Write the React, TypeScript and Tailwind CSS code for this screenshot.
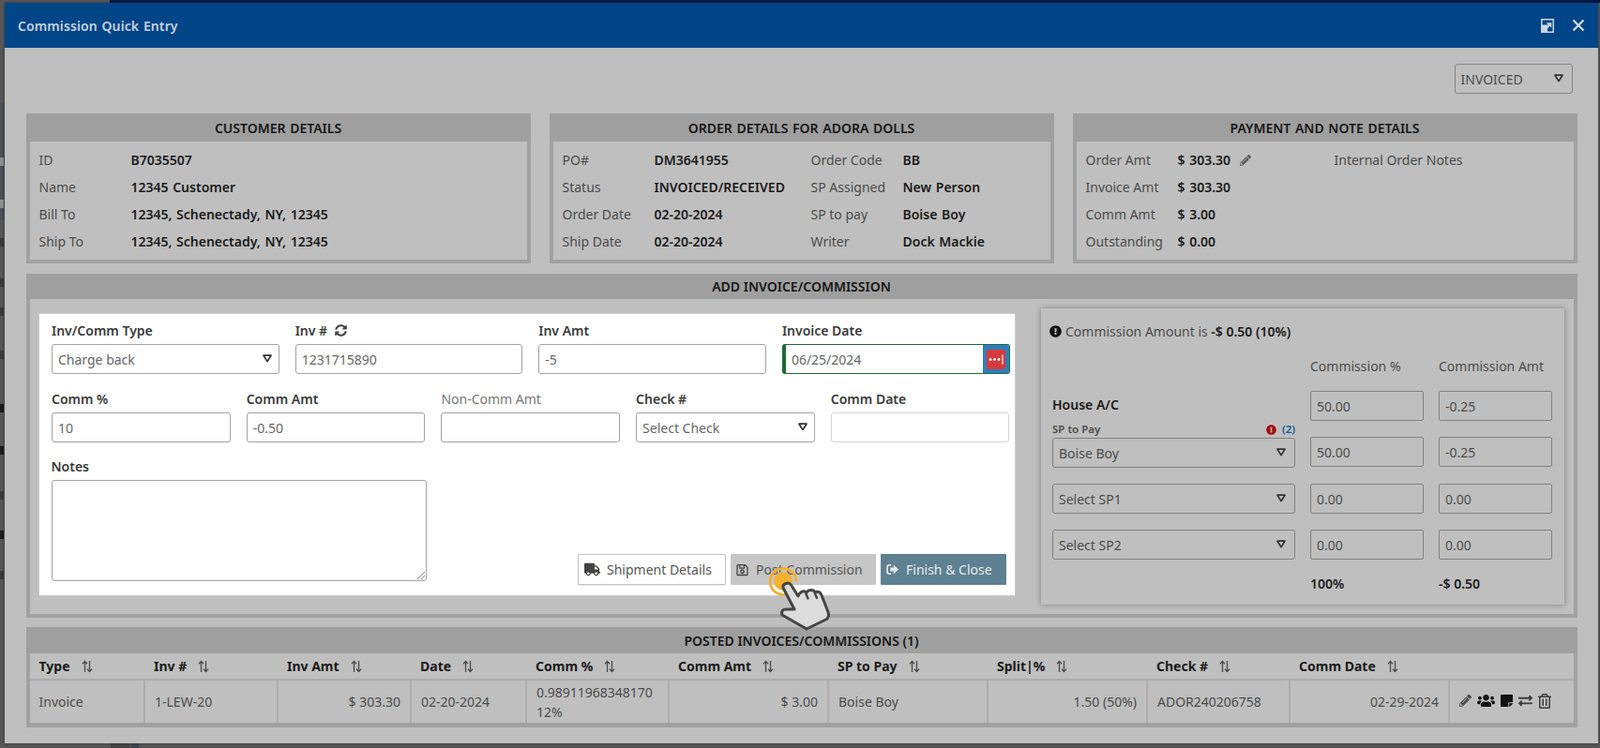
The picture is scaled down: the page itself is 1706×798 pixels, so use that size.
import type { ReactNode } from 'react';
import { FaExclamationCircle, FaExchangeAlt, FaPencilAlt, FaRegSave, FaRegTrashAlt, FaStickyNote, FaSyncAlt, FaTruck, FaUsers } from 'react-icons/fa';

function Caret() {
  return (
    <svg viewBox="0 0 10 9" className="w-[10px] h-[9px] shrink-0 -mt-[2px]">
      <path d="M1 1.2h8L5 7.6z" fill="none" stroke="#333" strokeWidth="1.7" strokeLinejoin="round" />
    </svg>
  );
}

function SortIcon() {
  return (
    <svg viewBox="0 0 12 14" className="w-[12px] h-[14px] ml-[12px] shrink-0">
      <path d="M3.5 13V2M1 4.2 3.5 1.4 6 4.2M8.5 1v11M6 9.8l2.5 2.8 2.5-2.8" fill="none" stroke="#4a4a4a" strokeWidth="1.3" />
    </svg>
  );
}

function SelectBox({ text, className }: { text: string; className: string }) {
  return (
    <div className={`h-[32px] flex items-center justify-between pl-[6px] pr-[9px] rounded-[3px] border text-[14px] ${className}`}>
      <span>{text}</span>
      <Caret />
    </div>
  );
}

function PanelBox({ title, children }: { title: string; children: ReactNode }) {
  return (
    <div className="h-[160px] border-x-[4px] border-b-[4px] border-[#a1a1a1]">
      <div className="h-[30px] -mx-[4px] bg-[#9f9f9f] flex items-center justify-center text-[14px] font-semibold text-[#151515] [word-spacing:1px]">{title}</div>
      {children}
    </div>
  );
}

function DetailRows({ rows, className }: { rows: ReactNode[][]; className: string }) {
  return (
    <div className={`grid auto-rows-[29px] pl-[10px] pt-[5px] items-center text-[14px] ${className}`}>
      {rows.map((row, r) =>
        row.map((c, i) => (
          <div key={`${r}-${i}`} className={i % 2 === 0 ? 'text-[#4b4b4b]' : 'font-semibold text-[#1a1a1a] [word-spacing:1px]'}>{c}</div>
        )),
      )}
    </div>
  );
}

function FormLabel({ children, light }: { children: ReactNode; light?: boolean }) {
  return (
    <div className={`h-[20px] mb-[4px] flex items-center text-[14px] -translate-y-[1px] ${light ? 'text-[#777]' : 'font-semibold text-[#3a3a3a]'}`}>{children}</div>
  );
}

function TextBox({ value, className = 'border-[#a3a3a3]' }: { value?: string; className?: string }) {
  return (
    <div className={`h-[32px] flex items-center px-[6px] rounded-[3px] border bg-white text-[14px] text-[#666] ${className}`}>{value}</div>
  );
}

function GreyInput({ value }: { value: string }) {
  return (
    <div className="h-[32px] flex items-center px-[6px] rounded-[2px] border-[1.5px] border-[#828282] text-[14px] text-[#4c4c4c]">{value}</div>
  );
}

function ExpandIcon() {
  return (
    <svg viewBox="0 0 14 15" className="w-[14px] h-[15px]">
      <path fillRule="evenodd" fill="#c9d5e2" d="M0 0h14v15H0zM1.5 1.5v5h3v-3h0v3h3.2L5.8 4.2h5.5v5.5L9.4 7.8 7 10.4v3.1h5.5V1.5z" />
      <rect x="1.5" y="10.5" width="3.4" height="3" fill="#c9d5e2" />
    </svg>
  );
}

function CloseIcon() {
  return (
    <svg viewBox="0 0 14 14" className="w-[14px] h-[14px]">
      <path d="M1.5 1.5 12.5 12.5M12.5 1.5 1.5 12.5" fill="none" stroke="#d3dce6" strokeWidth="2.2" />
    </svg>
  );
}

function DotsIcon() {
  return (
    <svg viewBox="0 0 20 21" className="w-[20px] h-[21px]">
      <rect width="20" height="21" rx="2.5" fill="#d63a3a" />
      <circle cx="4" cy="10.5" r="1.4" fill="#fff" />
      <circle cx="8.5" cy="10.5" r="1.4" fill="#fff" />
      <circle cx="13" cy="10.5" r="1.4" fill="#fff" />
      <rect x="16.4" y="5.5" width="1.2" height="10" fill="#fff" />
    </svg>
  );
}

function ExitIcon() {
  return (
    <svg viewBox="0 0 15 13" className="w-[14px] h-[13px]">
      <path d="M5.5 1.5H3A1.8 1.8 0 0 0 1.2 3.3v6.4A1.8 1.8 0 0 0 3 11.5h2.5" fill="none" stroke="#e6ecf0" strokeWidth="1.8" />
      <path d="M8.4 1.2 14 6.5l-5.6 5.3V8.7H4.6V4.3h3.8z" fill="#e6ecf0" />
    </svg>
  );
}

// pulse ring and pointer drawn over the Post Commission button
function ClickHand() {
  return (
    <svg viewBox="0 0 70 70" className="absolute left-[820px] top-[605px] w-[70px] h-[70px] pointer-events-none">
      <path d="M22 27.5A14 14 0 1 1 29 15" fill="none" stroke="#f5ad2e" strokeWidth="2.6" />
      <circle cx="15" cy="15" r="10" fill="#f7b02f" />
      <path
        d="M15 22C14 17.5 21 15.5 23.5 19L31 31C32 27 37 24 40 27C42 24 47 23.5 49.5 27C52 25 55 27 56 30L63 48C64 51 63 54 61.5 55.5L40 66L14 51C12.5 47 15 45 18 45L27 45Z"
        fill="#dcdcdc"
        stroke="#454545"
        strokeWidth="3"
        strokeLinejoin="round"
      />
      <path d="M39 27.5l2.5 6M48.5 27l2.500 6" fill="none" stroke="#454545" strokeWidth="2.4" strokeLinecap="round" />
    </svg>
  );
}

const headers = ['Type', 'Inv #', 'Inv Amt', 'Date', 'Comm %', 'Comm Amt', 'SP to Pay', 'Split|%', 'Check #', 'Comm Date'];

// slivers of the page text that shows behind the modal on its left edge
const slivers: [number, string][] = [
  [168, '#8f8f8f'],
  [213, '#8f8f8f'],
  [254, '#3a3a3a'],
  [297, '#3a3a3a'],
  [328, '#3a3a3a'],
  [374, '#3a3a3a'],
  [431, '#1c1c1c'],
  [476, '#1c1c1c'],
  [524, '#3a3a3a'],
  [566, '#1c1c1c'],
  [609, '#3a3a3a'],
];

export default function App() {
  return (
    <div className="relative w-[1706px] h-[798px] overflow-hidden bg-[#565656] font-['Open_Sans',sans-serif]">
      <div className="absolute left-[117px] top-0 right-0 h-[3px] bg-[#001a45]" />
      <div className="absolute left-0 top-[110px] w-[5px] h-[125px] bg-[#4a5058]" />
      <div className="absolute left-[118px] bottom-0 w-[20px] h-[5px] bg-[#454545]" />
      <div className="absolute left-[140px] bottom-0 w-[8px] h-[5px] bg-[#3f4650]" />
      {slivers.map(([top, color]) => (
        <div key={top} className="absolute left-0 w-[4px] h-[9px]" style={{ top, backgroundColor: color }} />
      ))}

      <div className="absolute left-[5px] top-[3px] w-[1699px] h-[790px] bg-[#bfbfbf] shadow-[0_0_3px_rgba(0,0,0,0.4)]">
        <div className="h-[48px] bg-[#004587] flex items-center justify-between pl-[14px] pr-[14px]">
          <span className="text-[14px] font-semibold text-[#c5d2df] tracking-[0.1px] [word-spacing:1px]">Commission Quick Entry</span>
          <div className="flex items-center gap-[19px]">
            <ExpandIcon />
            <CloseIcon />
          </div>
        </div>

        <div className="px-[22.5px]">
          <div className="flex justify-end pt-[17px] pr-[5px]">
            <SelectBox text="INVOICED" className="w-[126px] border-[#858585] border-[1.5px] text-[#4c4c4c]" />
          </div>

          <div className="grid grid-cols-3 gap-x-[20px] mt-[21px]">
            <PanelBox title="CUSTOMER DETAILS">
              <DetailRows
                className="grid-cols-[98px_1fr]"
                rows={[
                  ['ID', 'B7035507'],
                  ['Name', '12345 Customer'],
                  ['Bill To', '12345, Schenectady, NY, 12345'],
                  ['Ship To', '12345, Schenectady, NY, 12345'],
                ]}
              />
            </PanelBox>
            <PanelBox title="ORDER DETAILS FOR ADORA DOLLS">
              <DetailRows
                className="grid-cols-[98px_167px_98px_1fr]"
                rows={[
                  ['PO#', 'DM3641955', 'Order Code', 'BB'],
                  ['Status', 'INVOICED/RECEIVED', 'SP Assigned', 'New Person'],
                  ['Order Date', '02-20-2024', 'SP to pay', 'Boise Boy'],
                  ['Ship Date', '02-20-2024', 'Writer', 'Dock Mackie'],
                ]}
              />
            </PanelBox>
            <PanelBox title="PAYMENT AND NOTE DETAILS">
              <DetailRows
                className="grid-cols-[98px_167px_1fr]"
                rows={[
                  [
                    'Order Amt',
                    <span className="flex items-center gap-[10px]">
                      $ 303.30
                      <FaPencilAlt className="w-[12px] h-[12px] text-[#5e5e5e]" />
                    </span>,
                    'Internal Order Notes',
                  ],
                  ['Invoice Amt', '$ 303.30', ''],
                  ['Comm Amt', '$ 3.00', ''],
                  ['Outstanding', '$ 0.00', ''],
                ]}
              />
            </PanelBox>
          </div>

          <div className="mt-[11px] h-[367px] border-x-[4px] border-b-[4px] border-[#a1a1a1]">
            <div className="h-[27px] -mx-[4px] bg-[#9f9f9f] flex items-center justify-center text-[14px] font-semibold text-[#151515]">ADD INVOICE/COMMISSION</div>
            <div className="flex items-start pl-[10px]">
              <div className="mt-[16px] w-[1040.5px] h-[300px] bg-white pl-[13.5px] pr-[5.5px] pt-[8px] shadow-[0_0_2px_rgba(255,255,255,0.6)]">
                <div className="grid grid-cols-4 gap-x-[17px]">
                  <div>
                    <FormLabel>Inv/Comm Type</FormLabel>
                    <SelectBox text="Charge back" className="border-[#a3a3a3] bg-white text-[#666] !pr-[7px]" />
                  </div>
                  <div>
                    <FormLabel>
                      Inv #
                      <FaSyncAlt className="w-[13px] h-[13px] ml-[8px] text-[#444]" />
                    </FormLabel>
                    <TextBox value="1231715890" />
                  </div>
                  <div>
                    <FormLabel>Inv Amt</FormLabel>
                    <TextBox value="-5" />
                  </div>
                  <div>
                    <FormLabel>Invoice Date</FormLabel>
                    <div className="h-[32px] flex rounded-[3px] border border-[#1f6b33] border-l-[4px] overflow-hidden text-[14px] text-[#666]">
                      <div className="flex-1 flex items-center pl-[6px]">06/25/2024</div>
                      <div className="w-[28px] bg-[#2f7dbd] flex items-center justify-center">
                        <DotsIcon />
                      </div>
                    </div>
                  </div>
                </div>

                <div className="grid grid-cols-5 gap-x-[17px] mt-[17px]">
                  <div>
                    <FormLabel>Comm %</FormLabel>
                    <TextBox value="10" />
                  </div>
                  <div>
                    <FormLabel>Comm Amt</FormLabel>
                    <TextBox value="-0.50" />
                  </div>
                  <div>
                    <FormLabel light>Non-Comm Amt</FormLabel>
                    <TextBox />
                  </div>
                  <div>
                    <FormLabel>Check #</FormLabel>
                    <SelectBox text="Select Check" className="border-[#a3a3a3] bg-white text-[#666] !pr-[7px]" />
                  </div>
                  <div>
                    <FormLabel>Comm Date</FormLabel>
                    <TextBox className="border-[#d4d4d4]" />
                  </div>
                </div>

                <div className="flex justify-between mt-[16px] -ml-[0.5px] mr-[3.5px]">
                  <div className="w-[400px]">
                    <FormLabel>Notes</FormLabel>
                    <div className="relative h-[108px] rounded-[3px] border border-[#a3a3a3]">
                      <svg viewBox="0 0 8 8" className="absolute right-[1px] bottom-[1px] w-[8px] h-[8px]">
                        <path d="M0 8 8 0M4 8l4-4" stroke="#666" strokeWidth="0.8" />
                      </svg>
                    </div>
                  </div>
                  <div className="self-end -mb-[4px] flex gap-[5px] text-[14px]">
                    <div className="w-[158px] h-[33px] flex items-center pl-[6px] gap-[7px] rounded-[1px] border border-[#c2c2c2] bg-white text-[#555] shadow-[0_1px_1px_rgba(0,0,0,0.1)]">
                      <FaTruck className="w-[17px] h-[15px] text-[#444]" />
                      Shipment Details
                    </div>
                    <div className="w-[155px] h-[33px] flex items-center pl-[6px] gap-[8px] rounded-[1px] bg-[#c6c6c6] text-[#555]">
                      <FaRegSave className="w-[13px] h-[14px] text-[#444]" />
                      Post Commission
                    </div>
                    <div className="w-[134px] h-[33px] flex items-center pl-[6px] gap-[7px] rounded-[1px] bg-[#5f7f92] text-[#e6ecf0]">
                      <ExitIcon />
                      Finish &amp; Close
                    </div>
                  </div>
                </div>
              </div>

              <div className="ml-[27.5px] mt-[10px] w-[558px] h-[316px] shadow-[0_0_6px_rgba(0,0,0,0.35)] pl-[12.5px] text-[14px]">
                <div className="flex items-center h-[20px] pt-[14px] box-content -ml-[3px] text-[#4c4c4c]">
                  <FaExclamationCircle className="w-[13px] h-[13px] mr-[4px] text-[#111]" />
                  Commission Amount is&nbsp;<span className="font-semibold text-[#1a1a1a]">-$ 0.50 (10%)</span>
                </div>
                <div className="grid grid-cols-[259px_121px_121px] gap-x-[16px] items-center">
                  <div className="mt-[17px] h-[20px] col-start-2 flex items-center text-[#4c4c4c]">Commission %</div>
                  <div className="mt-[17px] h-[20px] flex items-center text-[#4c4c4c]">Commission Amt</div>

                  <div className="mt-[15px] -translate-y-[1px] font-semibold text-[#1a1a1a]">House A/C</div>
                  <div className="mt-[17px]"><GreyInput value="50.00" /></div>
                  <div className="mt-[17px]"><GreyInput value="-0.25" /></div>

                  <div className="relative mt-[17px] translate-y-[1px]">
                    <div className="absolute -top-[17px] left-0 right-0 h-[16px] flex items-center justify-between text-[11.5px] font-semibold text-[#4c4c4c]">
                      <span>SP to Pay</span>
                      <span className="flex items-center gap-[6px] text-[#0c5a9c]">
                        <FaExclamationCircle className="w-[11px] h-[11px] text-[#a80d0d]" />
                        (2)
                      </span>
                    </div>
                    <SelectBox text="Boise Boy" className="border-[#828282] border-[1.5px] text-[#4c4c4c]" />
                  </div>
                  <div className="mt-[17px]"><GreyInput value="50.00" /></div>
                  <div className="mt-[17px]"><GreyInput value="-0.25" /></div>

                  <div className="mt-[18px]"><SelectBox text="Select SP1" className="border-[#828282] border-[1.5px] text-[#4c4c4c]" /></div>
                  <div className="mt-[18px]"><GreyInput value="0.00" /></div>
                  <div className="mt-[18px]"><GreyInput value="0.00" /></div>

                  <div className="mt-[17px]"><SelectBox text="Select SP2" className="border-[#828282] border-[1.5px] text-[#4c4c4c]" /></div>
                  <div className="mt-[17px]"><GreyInput value="0.00" /></div>
                  <div className="mt-[17px]"><GreyInput value="0.00" /></div>

                  <div className="mt-[15px] h-[20px] col-start-2 flex items-center font-semibold text-[#1a1a1a]">100%</div>
                  <div className="mt-[15px] h-[20px] flex items-center font-semibold text-[#1a1a1a]">-$ 0.50</div>
                </div>
              </div>
            </div>
          </div>

          <div className="mt-[10px] border-x-[4px] border-b-[5px] border-[#a1a1a1]">
            <div className="h-[28px] -mx-[4px] bg-[#9f9f9f] flex items-center justify-center text-[14px] font-semibold text-[#151515]">POSTED INVOICES/COMMISSIONS (1)</div>
            <table className="w-full table-fixed border-collapse text-[14px]">
              <colgroup>
                <col className="w-[122.5px]" />
                <col className="w-[142px]" />
                <col className="w-[142px]" />
                <col className="w-[123px]" />
                <col className="w-[152px]" />
                <col className="w-[170px]" />
                <col className="w-[170px]" />
                <col className="w-[170px]" />
                <col className="w-[152px]" />
                <col className="w-[170px]" />
                <col />
              </colgroup>
              <thead>
                <tr className="h-[28px] border-b-[2px] border-[#adadad]">
                  {headers.map((h) => (
                    <th key={h} className="pl-[10px] text-left font-bold text-[#1a1a1a]">
                      <span className="flex items-center">
                        {h}
                        <SortIcon />
                      </span>
                    </th>
                  ))}
                  <th />
                </tr>
              </thead>
              <tbody className="text-[#4c4c4c]">
                <tr className="h-[46px] leading-[21px] [&>td]:border-r-[2px] [&>td]:border-[#adadad] [&>td]:px-[10px]">
                  <td>Invoice</td>
                  <td>1-LEW-20</td>
                  <td className="text-right">$ 303.30</td>
                  <td>02-20-2024</td>
                  <td>0.98911968348170<br />12%</td>
                  <td className="text-right">$ 3.00</td>
                  <td>Boise Boy</td>
                  <td className="text-right">1.50 (50%)</td>
                  <td>ADOR240206758</td>
                  <td className="text-right">02-29-2024</td>
                  <td className="!border-r-0">
                    <div className="flex items-center gap-[6px] -mt-[2px]">
                      <FaPencilAlt className="w-[13px] h-[13px] text-[#4a4a4a]" />
                      <FaUsers className="w-[19px] h-[15px] text-[#111]" />
                      <FaStickyNote className="w-[13px] h-[15px] text-[#111]" />
                      <FaExchangeAlt className="w-[15px] h-[15px] text-[#3c3c3c]" />
                      <FaRegTrashAlt className="w-[14px] h-[16px] text-[#3c3c3c]" />
                    </div>
                  </td>
                </tr>
              </tbody>
            </table>
          </div>
        </div>
      </div>

      <ClickHand />
    </div>
  );
}
